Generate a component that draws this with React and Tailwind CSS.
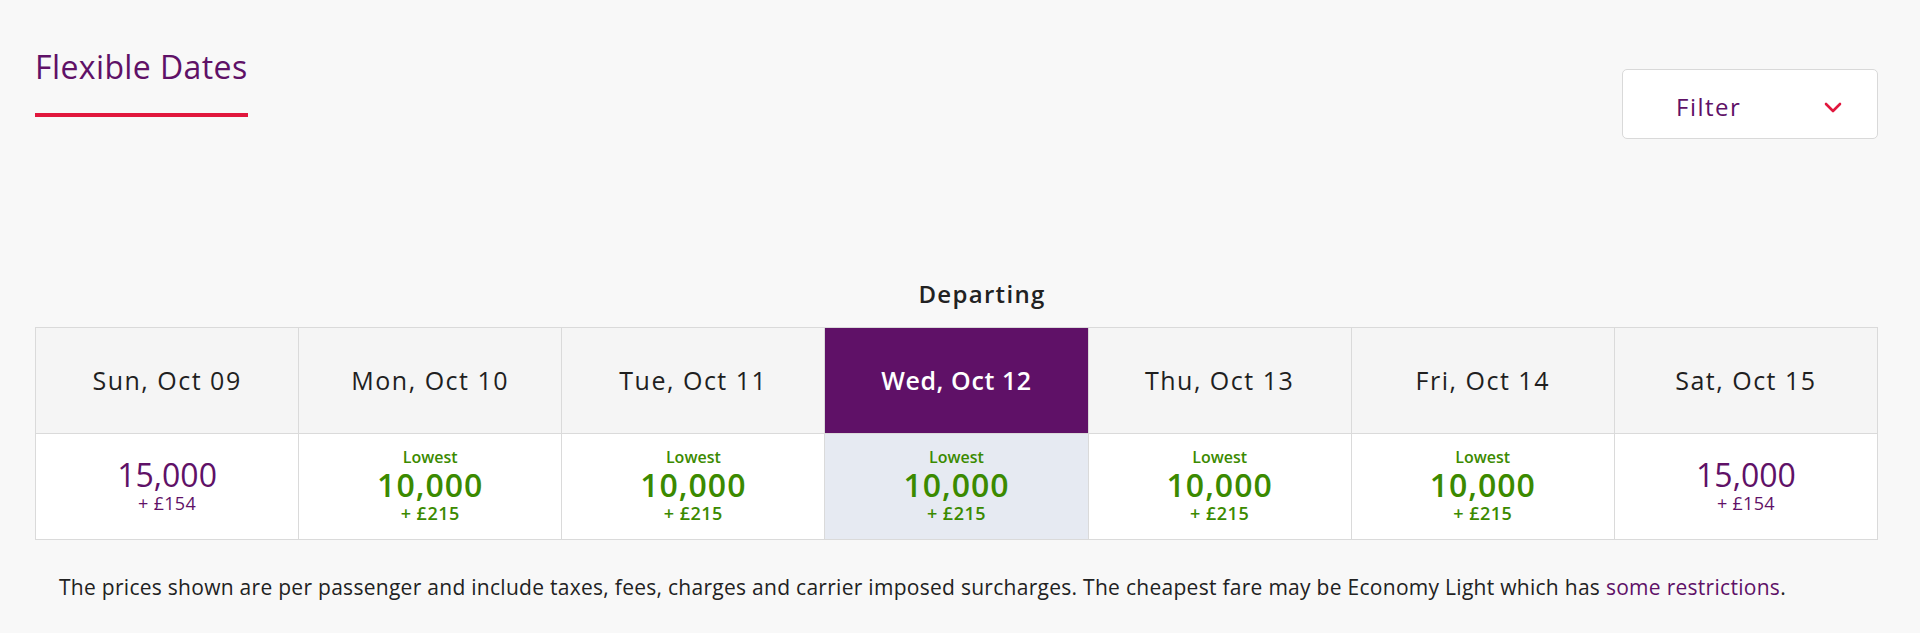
import React from "react";

const days = [
  { label: "Sun, Oct 09", lowest: false, pts: "15,000", cash: "+ £154" },
  { label: "Mon, Oct 10", lowest: true, pts: "10,000", cash: "+ £215" },
  { label: "Tue, Oct 11", lowest: true, pts: "10,000", cash: "+ £215" },
  { label: "Wed, Oct 12", lowest: true, pts: "10,000", cash: "+ £215", selected: true },
  { label: "Thu, Oct 13", lowest: true, pts: "10,000", cash: "+ £215" },
  { label: "Fri, Oct 14", lowest: true, pts: "10,000", cash: "+ £215" },
  { label: "Sat, Oct 15", lowest: false, pts: "15,000", cash: "+ £154" },
];

export default function App() {
  return (
    <div
      className="min-h-[633px] bg-[#f8f8f8] text-[#222222]"
      style={{ fontFamily: '"Open Sans", "Liberation Sans", sans-serif' }}
    >
      <div className="ml-[35px] mr-[42px]">
        <div className="flex items-start justify-between">
          <div className="pt-[47px]">
            <h1 className="text-[32px] leading-[40px] tracking-[0.4px] text-[#5f1167] font-normal">Flexible Dates</h1>
            <div className="mt-[26px] h-[4px] w-[213px] bg-[#e1173d]"></div>
          </div>
          <button className="mt-[69px] flex h-[70px] w-[256px] items-center justify-between rounded-[5px] border border-[#d9d9d9] bg-white pl-[53px] pr-[35px] pt-[6px]">
            <span className="text-[24px] leading-[28px] tracking-[1.5px] text-[#5f1167]">Filter</span>
            <svg width="18" height="11" viewBox="0 0 18 11" fill="none">
              <polyline points="2,2 9,9 16,2" stroke="#e1173d" strokeWidth="2.6" strokeLinecap="round" strokeLinejoin="round" />
            </svg>
          </button>
        </div>

        <div className="mt-[143px] flex justify-center pl-[51px]">
          <div className="text-[24px] leading-[24px] tracking-[1.3px] font-semibold text-[#222222]">Departing</div>
        </div>

        <div className="mt-[21px] grid grid-cols-7 border-l border-t border-[#dadada]">
          {days.map((d) => (
            <div
              key={d.label + "h"}
              className={
                d.selected
                  ? "flex h-[106px] items-center justify-center border-b border-r border-[#dadada] bg-[#5f1167] text-[25px] tracking-[0.6px] font-semibold text-white"
                  : "flex h-[106px] items-center justify-center border-b border-r border-[#dadada] bg-[#f5f5f5] text-[25px] tracking-[1.5px] text-[#1f1f1f]"
              }
            >
              {d.label}
            </div>
          ))}
          {days.map((d) => (
            <div
              key={d.label + "p"}
              className={
                d.selected
                  ? "flex h-[106px] flex-col items-center border-b border-r border-[#dadada] bg-[#e6eaf2]"
                  : "flex h-[106px] flex-col items-center border-b border-r border-[#dadada] bg-white"
              }
            >
              {d.lowest ? (
                <div className="flex flex-col items-center pt-[13px] text-[#3b8a00]">
                  <div className="text-[16px] leading-[20px] font-semibold">Lowest</div>
                  <div className="text-[32px] leading-[36px] tracking-[1px] font-semibold">{d.pts}</div>
                  <div className="text-[18px] leading-[20px] tracking-[0.5px] font-semibold">{d.cash}</div>
                </div>
              ) : (
                <div className="flex flex-col items-center pt-[23px] text-[#5f1167]">
                  <div className="text-[32px] leading-[36px]">{d.pts}</div>
                  <div className="text-[18px] leading-[20px] tracking-[0.3px]">{d.cash}</div>
                </div>
              )}
            </div>
          ))}
        </div>

        <p className="mt-[35px] pl-[24px] text-[21px] leading-[24px] tracking-[0.28px] text-[#222222]">
          The prices shown are per passenger and include taxes, fees, charges and carrier imposed surcharges. The cheapest fare may be Economy Light which has{" "}
          <a className="text-[#5f1167]">some restrictions</a>.
        </p>
      </div>
    </div>
  );
}
